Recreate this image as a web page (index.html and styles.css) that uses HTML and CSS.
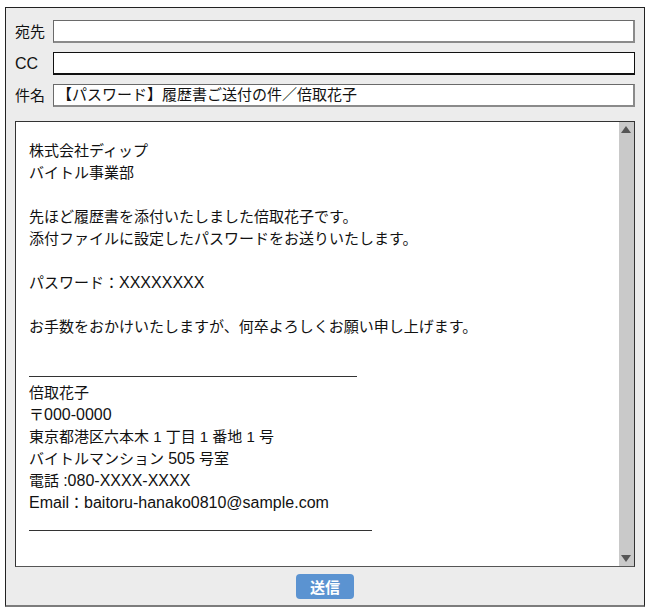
FILE: index.html
```html
<!DOCTYPE html>
<html lang="ja">
<head>
  <meta charset="UTF-8">
  <meta name="viewport" content="width=device-width, initial-scale=1.0">
  <title>パスワード送付メール</title>
  <link rel="stylesheet" href="styles.css">
</head>
<body>
<div class="mail">
  <div class="field">
    <label>宛先</label>
    <div class="input input-inset"></div>
  </div>
  <div class="field">
    <label><span class="en">CC</span></label>
    <div class="input input-plain"></div>
  </div>
  <div class="field">
    <label>件名</label>
    <div class="input input-inset">【パスワード】履歴書ご送付の件／倍取花子</div>
  </div>

  <div class="mail-body">
    <div class="body-text">
      <p>株式会社ディップ</p>
      <p>バイトル事業部</p>
      <p class="blank"></p>
      <p>先ほど履歴書を添付いたしました倍取花子です。</p>
      <p>添付ファイルに設定したパスワードをお送りいたします。</p>
      <p class="blank"></p>
      <p>パスワード：<span class="en">XXXXXXXX</span></p>
      <p class="blank"></p>
      <p>お手数をおかけいたしますが、何卒よろしくお願い申し上げます。</p>
      <p class="blank"></p>
      <p class="rule"><span class="rule-line short"></span></p>
      <p>倍取花子</p>
      <p>〒<span class="en">000-0000</span></p>
      <p>東京都港区六本木 1 丁目 1 番地 1 号</p>
      <p>バイトルマンション <span class="en">505</span> 号室</p>
      <p>電話 <span class="en">:080-XXXX-XXXX</span></p>
      <p><span class="en">Email</span>：<span class="en">baitoru-hanako0810@sample.com</span></p>
      <p class="rule"><span class="rule-line long"></span></p>
    </div>
    <div class="scrollbar">
      <span class="arrow up"></span>
      <span class="arrow down"></span>
    </div>
  </div>

  <div class="actions">
    <button class="send-btn">送信</button>
  </div>
</div>
</body>
</html>
```

FILE: styles.css
```css
* { margin: 0; padding: 0; box-sizing: border-box; }

body {
  background: #fff;
  font-family: "Liberation Sans", "Noto Sans CJK JP", sans-serif;
  color: #111;
  font-size: 15px;
}

.en { font-size: 16px; }

.mail {
  margin: 7px 6px 0 5px;
  width: 640px;
  height: 600px;
  background: #ececec;
  border: 1px solid #222;
  border-bottom: 2px solid #7c7c7c;
  padding: 12px 9px 0 9px;
  display: flex;
  flex-direction: column;
}

.field {
  display: flex;
  align-items: center;
  margin-bottom: 9px;
}
.field label {
  width: 38px;
  font-size: 15px;
  line-height: 23px;
}
.input {
  flex: 1;
  height: 23px;
  background: #fff;
  font-size: 15px;
  line-height: 20px;
  padding-left: 3px;
  white-space: nowrap;
}
.input-inset {
  border: 1px solid #6a6a6a;
  border-right: 2px solid #8a8a8a;
  border-bottom: 2px solid #8a8a8a;
}
.input-plain {
  border: 1px solid #111;
  border-bottom-width: 2px;
}

.mail-body {
  margin-top: 5px;
  height: 446px;
  background: #fff;
  border: 1px solid #333;
  border-bottom-color: #555;
  display: flex;
}
.body-text {
  flex: 1;
  padding: 18px 0 0 13px;
  line-height: 22px;
}
.body-text p { height: 22px; white-space: nowrap; }
.rule { position: relative; }
.rule-line {
  position: absolute;
  left: 0;
  top: 16px;
  border-bottom: 1px solid #333;
}
.rule-line.short { width: 328px; }
.rule-line.long { width: 343px; }

.scrollbar {
  width: 15px;
  background: #c9c9c9;
  position: relative;
}
.arrow {
  position: absolute;
  left: 2px;
  width: 0;
  height: 0;
  border-left: 5px solid transparent;
  border-right: 5px solid transparent;
}
.arrow.up {
  top: 4px;
  border-bottom: 7px solid #555;
}
.arrow.down {
  bottom: 4px;
  border-top: 7px solid #555;
}

.actions {
  display: flex;
  justify-content: center;
  padding-top: 7px;
}
.send-btn {
  width: 58px;
  height: 25px;
  background: #5b93d1;
  color: #fff;
  border: none;
  border-radius: 4px;
  font-family: "Noto Sans CJK JP", sans-serif;
  font-weight: bold;
  font-size: 15px;
  line-height: 25px;
}
```
